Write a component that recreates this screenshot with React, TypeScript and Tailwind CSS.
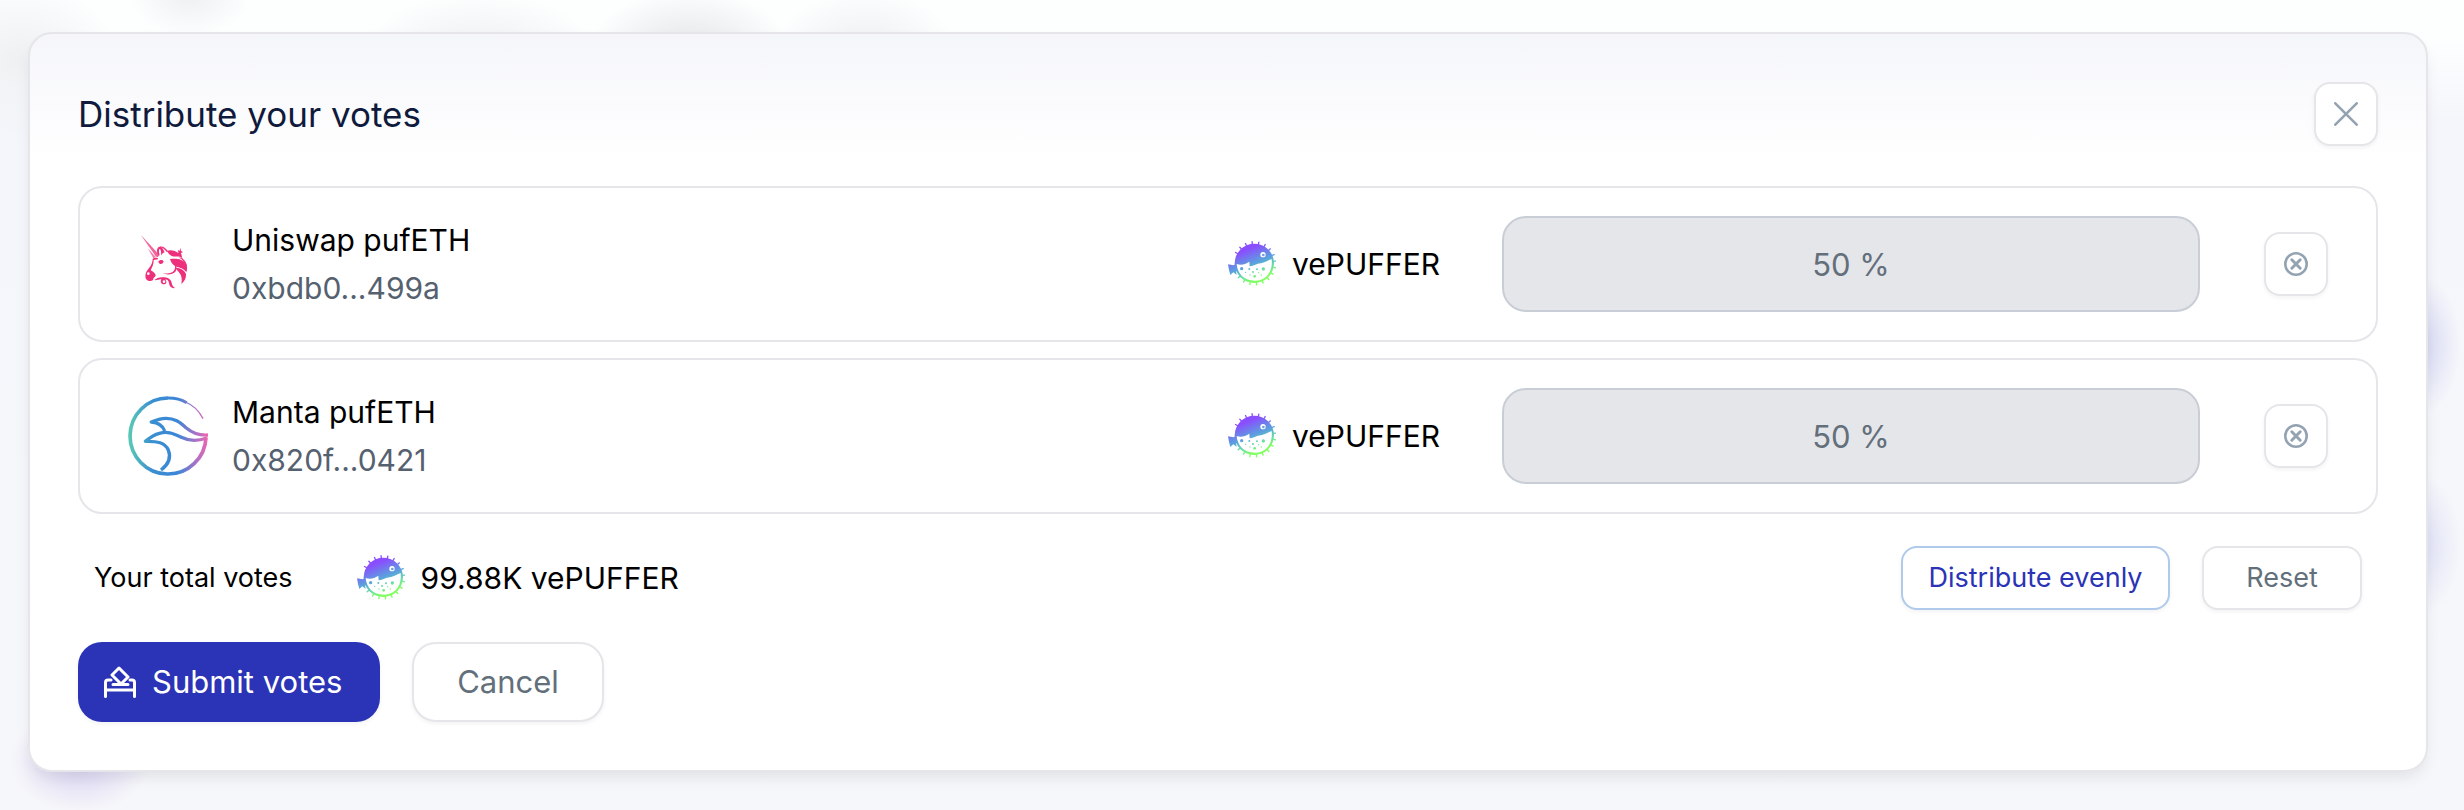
import { useId } from "react";
import type { ReactNode } from "react";

function UnicornLogo() {
  return (
    <svg viewBox="54 42 240 240" className="size-20 shrink-0" fill="#ee2f7b" aria-hidden="true">
      <path d="M92 74L149 136L143 141L138 140Z" opacity="0.75" />
      <path d="M113 114L138 142L130 145Z" opacity="0.6" />
      <path d="M144 134C138 122 142 111 149 110C156 110 160 118 164 127C159 128 155 132 153 137C154 127 153 118 149 117C146 119 146 127 149 134Z" />
      <path d="M149 110C160 108 168 115 174 124L170 126C165 118 158 113 149 110Z" />
      <path d="M171 122C183 118 196 122 206 130L203 120L209 123L211 113L213 123L219 126L213 129L217 144C207 136 196 142 185 138C178 134 174 129 171 122Z" />
      <path d="M180 147C198 145 219 146 229 163C232 170 232 178 229 187C222 176 211 172 200 170C189 166 183 158 180 147Z" />
      <path d="M197 173C211 174 224 180 228 192C229 204 224 214 214 222C217 207 215 197 208 188C204 182 200 180 197 173Z" />
      <path d="M206 142C217 142 228 152 232 170C225 157 217 149 206 142Z" />
      <path d="M128 146C132 143 139 142 144 144L142 149C137 148 133 149 131 151C131 163 127 171 122 181C128 184 137 190 137 197C134 201 130 203 129 210C122 216 112 213 108 207C105 201 106 190 110 184C119 171 128 162 128 146Z" />
      <circle cx="115" cy="191" r="4" fill="#fff" />
      <path d="M145 155C149 149 157 149 161 154C160 159 157 162 152 162C148 161 146 158 145 155Z" />
      <path d="M158 190C175 192 190 189 194 178C197 171 195 163 191 156C201 165 202 178 196 185C187 195 169 195 158 190Z" />
      <path d="M133 210C141 203 151 200 163 202C178 204 183 210 185 219C187 227 189 231 196 234C185 236 178 230 177 220C176 212 172 208 166 209C172 215 169 223 161 223C153 223 150 215 154 208C147 207 140 212 133 210Z" />
      <circle cx="162" cy="215" r="4" fill="#fff" />
    </svg>
  );
}

function MantaLogo() {
  const id = useId();
  return (
    <svg viewBox="54 48 240 240" className="size-20 shrink-0" fill="none" aria-hidden="true">
      <defs>
        <linearGradient id={id} x1="54" y1="168" x2="294" y2="168" gradientUnits="userSpaceOnUse">
          <stop offset="0" stopColor="#5ccbb4" />
          <stop offset="0.3" stopColor="#3a8fd0" />
          <stop offset="0.62" stopColor="#3b86d8" />
          <stop offset="0.84" stopColor="#a572c8" />
          <stop offset="1" stopColor="#ee66ae" />
        </linearGradient>
      </defs>
      <g stroke={`url(#${id})`} strokeLinejoin="round">
        <path d="M174 54A114 114 0 1 0 288 172" strokeWidth="11" />
        <path d="M174 54C195 54 214 58 230 68" strokeWidth="9" />
        <path d="M226 66C249 75 267 92 279 116" strokeWidth="4" />
        <path
          d="M294 165C268 167 246 158 228 143C208 125 194 115 168 115C148 115 137 120 124 126C144 128 158 135 164 153"
          strokeWidth="10"
        />
        <path
          d="M291 174C262 184 238 184 214 172C187 158 170 154 148 160C129 165 116 176 106 184C142 183 165 188 175 210C183 230 177 252 153 270"
          strokeWidth="10"
        />
      </g>
    </svg>
  );
}

const spikes = Array.from({ length: 20 }, (_, i) => i * 18 + 12);
const spots = [
  [59, 98, 5],
  [82, 99, 3],
  [105, 100, 3],
  [124, 99, 5],
  [71, 109, 2],
  [93, 108, 3],
  [84, 117, 2],
  [110, 110, 2],
  [98, 121, 4],
  [118, 117, 2],
];

function PufferLogo() {
  const id = useId();
  return (
    <svg viewBox="18 12 144 144" className="size-12 shrink-0" aria-hidden="true">
      <defs>
        <linearGradient id={id} x1="74" y1="28" x2="118" y2="138" gradientUnits="userSpaceOnUse">
          <stop offset="0.1" stopColor="#8a4dff" />
          <stop offset="0.5" stopColor="#5aa4dc" />
          <stop offset="0.72" stopColor="#6ce0a4" />
          <stop offset="0.9" stopColor="#80ff62" />
        </linearGradient>
      </defs>
      <g fill={`url(#${id})`}>
        <circle cx="97" cy="82" r="59" />
        <path d="M50 80L34 88L18 85L21 102L25 117L34 109L44 117L42 105L54 108Z" />
      </g>
      <g stroke={`url(#${id})`} strokeWidth="4" strokeLinecap="round">
        {spikes
          .filter((deg) => deg < 155 || deg > 195)
          .map((deg) => {
            const a = (deg * Math.PI) / 180;
            return (
              <line
                key={deg}
                x1={97 + 56 * Math.cos(a)}
                y1={82 + 56 * Math.sin(a)}
                x2={97 + 65 * Math.cos(a)}
                y2={82 + 65 * Math.sin(a)}
              />
            );
          })}
      </g>
      <path
        d="M44 84C57 88 69 86 82 77L83 91C93 91 99 85 108 83C126 81 138 74 149 69C153 103 136 132 102 134C67 135 46 113 44 84Z"
        fill="#fff"
      />
      <circle cx="123" cy="56" r="8" fill="#fff" />
      <circle cx="124" cy="57" r="4" fill="#6d9ee6" />
      <g fill={`url(#${id})`}>
        {spots.map(([x, y, r]) => (
          <circle key={`${x}-${y}`} cx={x} cy={y} r={r} />
        ))}
      </g>
    </svg>
  );
}

function BallotIcon() {
  return (
    <svg
      viewBox="0 0 32 32"
      className="size-8 shrink-0"
      fill="none"
      stroke="currentColor"
      strokeWidth="3"
      strokeLinecap="round"
      strokeLinejoin="round"
      aria-hidden="true"
    >
      <path d="M15 2L24 11L17 18L8 9Z" />
      <path d="M9 18.5H24M7 14H4C2.5 14 1.5 15 1.5 16.5V30.5M26 14H28C29.5 14 30.5 15 30.5 16.5V30.5M2 24H30" />
    </svg>
  );
}

const outlined = "rounded-2xl border-2 border-[#e5e5ea] bg-white shadow-[0_2px_4px_rgba(16,24,40,0.05)]";

type Pool = { name: string; address: string; share: string; logo: ReactNode };

const pools: Pool[] = [
  { name: "Uniswap pufETH", address: "0xbdb0...499a", share: "50 %", logo: <UnicornLogo /> },
  { name: "Manta pufETH", address: "0x820f...0421", share: "50 %", logo: <MantaLogo /> },
];

function PoolRow({ pool }: { pool: Pool }) {
  return (
    <li className="grid grid-cols-2 items-center rounded-3xl border-2 border-[#e5e5ea] bg-white px-12 py-7">
      <div className="flex items-center gap-6">
        {pool.logo}
        <div className="text-[30px] leading-[48px]">
          <p className="text-black">{pool.name}</p>
          <p className="text-[#566170]">{pool.address}</p>
        </div>
      </div>
      <div className="flex items-center gap-16">
        <div className="flex w-[210px] shrink-0 items-center gap-4 text-[30px] leading-[48px] text-black">
          <PufferLogo />
          <span>vePUFFER</span>
        </div>
        <input
          type="text"
          disabled
          defaultValue={pool.share}
          aria-label={`Share of votes for ${pool.name}`}
          className="h-24 min-w-0 flex-1 rounded-3xl border-2 border-[#c9ced6] bg-[#e5e6ea] text-center text-[31px] text-[#636f7b]"
        />
        <button
          type="button"
          aria-label={`Remove ${pool.name}`}
          className={`flex size-16 shrink-0 items-center justify-center text-[#94a3b2] ${outlined}`}
        >
          <svg viewBox="0 0 24 24" className="size-6" fill="none" stroke="currentColor" strokeLinecap="round" aria-hidden="true">
            <circle cx="12" cy="12" r="10.7" strokeWidth="2.6" />
            <path d="M7.8 7.8L16.2 16.2M16.2 7.8L7.8 16.2" strokeWidth="3" />
          </svg>
        </button>
      </div>
    </li>
  );
}

export default function App() {
  return (
    <div className="min-h-screen bg-[radial-gradient(ellipse_120px_60px_at_480px_54px,#eeeff1,transparent),radial-gradient(ellipse_100px_60px_at_690px_50px,#e4e5e8,transparent),radial-gradient(ellipse_90px_60px_at_865px_50px,#eeeff1,transparent),radial-gradient(ellipse_60px_40px_at_190px_-4px,#eff0f2,transparent),radial-gradient(ellipse_100px_80px_at_20px_60px,#eff0f2,transparent),radial-gradient(ellipse_40px_70px_at_2420px_345px,#d3d5f2,transparent),radial-gradient(ellipse_40px_70px_at_2420px_545px,#dcdef5,transparent),radial-gradient(ellipse_70px_50px_at_80px_762px,#d8d2f2,transparent),linear-gradient(#fdfefe_0,#fdfefe_40px,#f5f6fb_120px,#f6f7fa_100%)] pt-8 pr-9 pb-[38px] pl-7 font-['Inter',sans-serif]">
      <section
        role="dialog"
        aria-labelledby="dialog-title"
        className="rounded-3xl border-2 border-[#e5e5ea] bg-linear-to-b from-[#f5f6fa] to-white to-[128px] px-12 pt-12 pb-12 shadow-[0_8px_16px_-4px_rgba(16,24,40,0.1)]"
      >
        <header className="flex items-center justify-between">
          <h1 id="dialog-title" className="text-[35px] leading-[48px] text-[#0f1a3c]">
            Distribute your votes
          </h1>
          <button
            type="button"
            aria-label="Close"
            className={`flex size-16 items-center justify-center text-[#94a3b2] ${outlined}`}
          >
            <svg viewBox="0 0 24 24" className="size-6" fill="none" stroke="currentColor" strokeWidth="2.6" strokeLinecap="round" aria-hidden="true">
              <path d="M1.3 1.3L22.7 22.7M22.7 1.3L1.3 22.7" />
            </svg>
          </button>
        </header>

        <ul className="mt-10 flex flex-col gap-4">
          {pools.map((pool) => (
            <PoolRow key={pool.name} pool={pool} />
          ))}
        </ul>

        <div className="mt-8 flex items-center justify-between px-4">
          <div className="flex items-center gap-16">
            <p className="text-[27px] leading-[48px] text-black">Your total votes</p>
            <p className="flex items-center gap-4 text-[30px] leading-[48px] text-black">
              <PufferLogo />
              <span>99.88K vePUFFER</span>
            </p>
          </div>
          <div className="flex items-center gap-8 text-[27px]">
            <button
              type="button"
              className="h-16 min-w-[269px] rounded-2xl border-2 border-[#afcaea] bg-white px-6 text-[#2b33b6] shadow-[0_2px_4px_rgba(16,24,40,0.05)]"
            >
              Distribute evenly
            </button>
            <button type="button" className={`h-16 min-w-[160px] px-6 text-[#636f7b] ${outlined}`}>
              Reset
            </button>
          </div>
        </div>

        <footer className="mt-8 flex items-center gap-8 text-[31px]">
          <button
            type="button"
            className="flex h-20 min-w-[302px] items-center gap-4 rounded-3xl bg-[#2b33b6] pr-8 pl-[26px] text-white shadow-[0_2px_4px_rgba(16,24,40,0.05)]"
          >
            <BallotIcon />
            Submit votes
          </button>
          <button
            type="button"
            className="h-20 min-w-[192px] rounded-3xl border-2 border-[#e5e5ea] bg-white px-10 text-[#636f7b] shadow-[0_2px_4px_rgba(16,24,40,0.05)]"
          >
            Cancel
          </button>
        </footer>
      </section>
    </div>
  );
}
